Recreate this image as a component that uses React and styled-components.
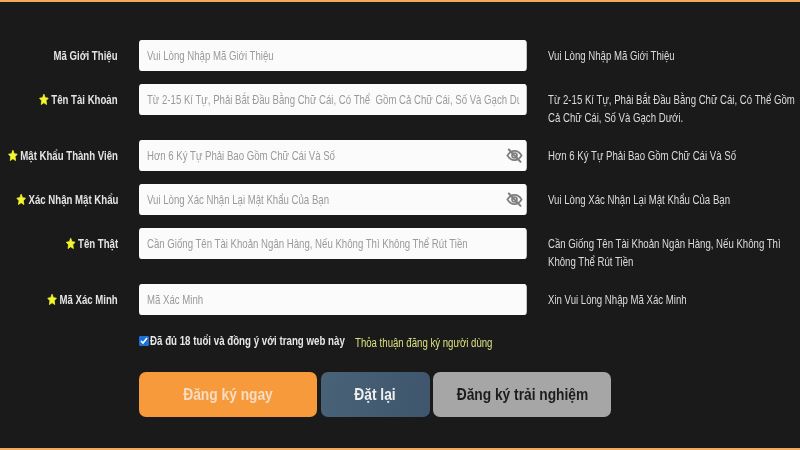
import React from "react";
import styled, { createGlobalStyle } from "styled-components";

const Global = createGlobalStyle`
  html, body { margin: 0; padding: 0; background: #1a1a1a; }
  body { width: 800px; height: 450px; overflow: hidden; font-family: "Liberation Sans", Arial, sans-serif; }
`;

const NARROW = 0.74;

const Page = styled.div`
  box-sizing: border-box;
  width: 800px;
  height: 450px;
  background: #1a1a1b;
  border-top: 2px solid #f4aa5c;
  border-bottom: 2px solid #f4aa5c;
  padding: 38px 0 0;
  filter: blur(0.35px);
`;

const Row = styled.div`
  display: grid;
  grid-template-columns: 118px 388px 1fr;
  column-gap: 21px;
  height: ${(p) => (p.$tall ? 56 : 44)}px;
  align-items: start;
`;

const Label = styled.label`
  display: flex;
  align-items: center;
  justify-content: flex-end;
  height: 31px;
`;

const LabelText = styled.span`
  display: inline-flex;
  align-items: center;
  gap: 3px;
  flex: none;
  transform: scaleX(${NARROW});
  transform-origin: right center;
  color: #e4e4e4;
  font-size: 13px;
  font-weight: 700;
  white-space: nowrap;
`;

const Star = styled.svg`
  width: 14px;
  height: 13px;
  flex: none;
  fill: #f4f52e;
  stroke: #f4f52e;
  stroke-width: 1.5;
  stroke-linejoin: round;
`;

const InputWrap = styled.div`
  position: relative;
  height: 31px;
`;

const Input = styled.input`
  box-sizing: border-box;
  display: block;
  width: ${100 / NARROW}%;
  height: 100%;
  border: 0;
  outline: 0;
  border-radius: 3.500px;
  background: #fbfbfb;
  padding: 0 ${8 / NARROW}px;
  transform: scaleX(${NARROW});
  transform-origin: left center;
  font: 13px "Liberation Sans", Arial, sans-serif;
  &::placeholder { color: #9a9a9a; opacity: 1; }
`;

const EyeIcon = styled.svg`
  position: absolute;
  right: 4px;
  top: 7px;
  width: 17px;
  height: 17px;
  fill: none;
  stroke: #7d7d7d;
  stroke-width: 2.400;
  stroke-linecap: round;
`;

const Hint = styled.div`
  width: ${250 / NARROW}px;
  padding-top: 7px;
  box-sizing: border-box;
  transform: scaleX(${NARROW});
  transform-origin: left top;
  color: #dcdcdc;
  font-size: 13px;
  line-height: 18px;
`;

const Agree = styled.div`
  display: flex;
  align-items: center;
  margin: 0 0 0 139px;
  height: 26px;
  white-space: nowrap;
`;

const Check = styled.input`
  flex: none;
  width: 10px;
  height: 10px;
  margin: 0 1px 0 0;
  accent-color: #1a6fd8;
`;

const AgreeText = styled.span`
  display: inline-block;
  flex: none;
  width: 205px;
  transform: scaleX(0.81);
  transform-origin: left center;
  color: #e6e6e6;
  font-size: 12px;
  font-weight: 700;
`;

const AgreeLink = styled.a`
  display: inline-block;
  position: relative;
  top: 2px;
  flex: none;
  transform: scaleX(0.77);
  transform-origin: left center;
  color: #dbe27f;
  font-size: 12.500px;
`;

const Buttons = styled.div`
  display: flex;
  margin: 18px 0 0 139px;
  height: 45px;
`;

const Button = styled.button`
  box-sizing: border-box;
  display: flex;
  align-items: center;
  justify-content: center;
  flex: none;
  width: ${(p) => p.$w}px;
  margin-right: ${(p) => p.$gap || 0}px;
  height: 100%;
  border: 0;
  border-radius: 7px;
  background: ${(p) => p.$bg};
  color: ${(p) => p.$fg};
  font: 700 16px "Liberation Sans", Arial, sans-serif;
  padding: 0;
  white-space: nowrap;
`;

const ButtonText = styled.span`
  display: inline-block;
  flex: none;
  transform: scaleX(0.86);
`;

const StarMark = () => (
  <Star viewBox="1 1 22 22" preserveAspectRatio="none" aria-hidden="true">
    <path d="M12 3l2.800 5.900 6.400.8-4.700 4.400 1.200 6.400L12 17.400l-5.700 3.100 1.200-6.400L2.800 9.700l6.400-.8z" />
  </Star>
);

const EyeOff = () => (
  <EyeIcon viewBox="0 0 24 24" aria-hidden="true">
    <path d="M2 12c2.600-4.400 6-6.600 10-6.600s7.400 2.200 10 6.600c-2.600 4.400-6 6.600-10 6.600S4.600 16.400 2 12z" />
    <circle cx="12" cy="12" r="3.500" />
    <path d="M4 3.500l16.500 17.500" strokeWidth="2.800" />
  </EyeIcon>
);

const rows = [
  { label: "Mã Giới Thiệu", ph: "Vui Lòng Nhập Mã Giới Thiệu", hint: "Vui Lòng Nhập Mã Giới Thiệu" },
  { label: "Tên Tài Khoản", star: 1, tall: 1, ph: "Từ 2-15 Kí Tự, Phải Bắt Đầu Bằng Chữ Cái, Có Thể  Gồm Cả Chữ Cái, Số Và Gạch Dưới.", hint: "Từ 2-15 Kí Tự, Phải Bắt Đầu Bằng Chữ Cái, Có Thể Gồm Cả Chữ Cái, Số Và Gạch Dưới." },
  { label: "Mật Khẩu Thành Viên", star: 1, eye: 1, ph: "Hơn 6 Ký Tự Phải Bao Gồm Chữ Cái Và Số", hint: "Hơn 6 Ký Tự Phải Bao Gồm Chữ Cái Và Số" },
  { label: "Xác Nhận Mật Khẩu", star: 1, eye: 1, ph: "Vui Lòng Xác Nhận Lại Mật Khẩu Của Bạn", hint: "Vui Lòng Xác Nhận Lại Mật Khẩu Của Bạn" },
  { label: "Tên Thật", star: 1, tall: 1, ph: "Cần Giống Tên Tài Khoản Ngân Hàng, Nếu Không Thì Không Thể Rút Tiền", hint: "Cần Giống Tên Tài Khoản Ngân Hàng, Nếu Không Thì Không Thể Rút Tiền" },
  { label: "Mã Xác Minh", star: 1, ph: "Mã Xác Minh", hint: "Xin Vui Lòng Nhập Mã Xác Minh" },
];

export default function App() {
  return (
    <Page>
      <Global />
      {rows.map((r) => (
        <Row key={r.label} $tall={r.tall}>
          <Label>
            <LabelText>
              {r.star ? <StarMark /> : null}
              {r.label}
            </LabelText>
          </Label>
          <InputWrap>
            <Input placeholder={r.ph} />
            {r.eye ? <EyeOff /> : null}
          </InputWrap>
          <Hint>{r.hint}</Hint>
        </Row>
      ))}
      <Agree>
        <Check type="checkbox" defaultChecked />
        <AgreeText>Đã đủ 18 tuổi và đồng ý với trang web này</AgreeText>
        <AgreeLink>Thỏa thuận đăng ký người dùng</AgreeLink>
      </Agree>
      <Buttons>
        <Button $w={178} $gap={4} $bg="#f79a3c" $fg="#f6dcc0"><ButtonText>Đăng ký ngay</ButtonText></Button>
        <Button $w={109} $gap={3} $bg="linear-gradient(100deg, #486277, #3f566c)" $fg="#f0f0f0"><ButtonText>Đặt lại</ButtonText></Button>
        <Button $w={178} $bg="#a6a6a6" $fg="#1c1c1c"><ButtonText>Đăng ký trải nghiệm</ButtonText></Button>
      </Buttons>
    </Page>
  );
}
